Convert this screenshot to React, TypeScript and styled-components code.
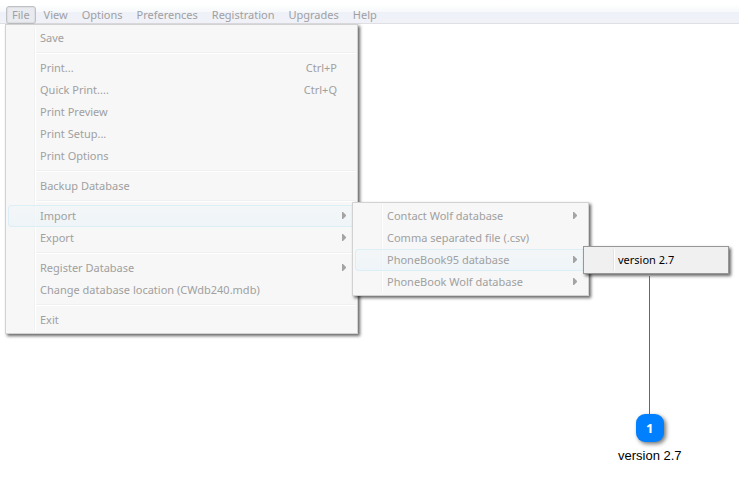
import React from "react";
import styled, { createGlobalStyle, css } from "styled-components";

const GlobalStyle = createGlobalStyle`
  *, *::before, *::after { box-sizing: border-box; }
  body {
    margin: 0;
    background: #ffffff;
    font-family: "Noto Sans", "Open Sans", sans-serif;
    font-size: 11px;
  }
`;

const Page = styled.main`
  min-height: 100vh;
  padding: 5px 9px 0 0;
`;

const MenuBar = styled.ul`
  display: flex;
  height: 19px;
  margin: 0;
  padding: 1px 5px 0;
  list-style: none;
  border-bottom: 1px solid #dfdfe4;
  background: linear-gradient(#fefefe 0, #f6f8fb 7px, #eef1f8 7px, #f1f2f8 100%);
`;

const BarItem = styled.li`
  position: relative;
`;

const BarButton = styled.button<{ $open?: boolean }>`
  display: block;
  height: 18px;
  margin: 0 1px;
  padding: 0 5px;
  border: 1px solid ${(p) => (p.$open ? "#bfc1c4" : "transparent")};
  border-radius: 3px;
  background: ${(p) => (p.$open ? "#e9ebf0" : "transparent")};
  box-shadow: ${(p) => (p.$open ? "inset 0 0 1px 1px #dcdee2" : "none")};
  color: #a0a0a2;
  font: inherit;
  line-height: 16px;
  white-space: nowrap;
`;

const Menu = styled.ul<{ $width: number; $active?: boolean }>`
  position: relative;
  width: max-content;
  min-width: ${(p) => p.$width}px;
  margin: 0;
  padding: 2px;
  list-style: none;
  border: 1px solid ${(p) => (p.$active ? "#979797" : "#d2d2d2")};
  box-shadow: 2px 2px 3px rgba(0, 0, 0, 0.6);
  ${(p) =>
    p.$active
      ? css`
          color: #000000;
          background: linear-gradient(90deg, #e2e3e3 1px, #ffffff 1px) 29px 2px / 2px calc(100% - 4px) no-repeat #f0f0f0;
        `
      : css`
          color: #a0a0a0;
          background: linear-gradient(90deg, #f0f1f1 1px, #ffffff 1px) 28px 2px / 2px calc(100% - 4px) no-repeat #f7f7f7;
        `}
`;

const FileMenu = styled(Menu)`
  margin-left: 5px;
`;

const Submenu = styled(Menu)`
  position: absolute;
  z-index: 1;
  top: -3px;
  left: calc(100% - 3px);
`;

const MenuItem = styled.li`
  position: relative;
`;

const ItemButton = styled.button<{ $selected?: boolean }>`
  display: flex;
  align-items: center;
  width: 100%;
  height: 22px;
  padding: 0 8px 2px 31px;
  border: 1px solid ${(p) => (p.$selected ? "#dceef6" : "transparent")};
  border-radius: 3px;
  background: ${(p) => (p.$selected ? "linear-gradient(rgba(242, 246, 248, 0.7), rgba(236, 244, 248, 0.8))" : "transparent")};
  color: inherit;
  font: inherit;
  text-align: left;
  white-space: nowrap;
`;

const ItemLabel = styled.span`
  flex: 1;
`;

const Shortcut = styled.kbd`
  padding-right: 9px;
  font: inherit;
`;

const Arrow = styled.svg`
  width: 4px;
  height: 7px;
  fill: #a4a4a4;
`;

const Separator = styled.li`
  height: 2px;
  margin: 3px 0 3px 28px;
  border-top: 1px solid #f0f0f0;
  border-bottom: 1px solid #ffffff;
`;

const Callout = styled.figure`
  position: absolute;
  top: 100%;
  left: 32px;
  display: flex;
  flex-direction: column;
  align-items: center;
  margin: 0;
  padding-top: 5px;
  color: #000000;
  font: 13px "Liberation Sans", Arial, sans-serif;
  white-space: nowrap;
`;

const Leader = styled.span`
  width: 1px;
  height: 138px;
  background: #0a7cf0;
`;

const Badge = styled.span`
  display: flex;
  align-items: center;
  justify-content: center;
  width: 28px;
  height: 28px;
  border-radius: 9px;
  background: #0080ff;
  box-shadow: 2px 2px 4px rgba(0, 0, 0, 0.55);
  color: #ffffff;
  font: bold 13px "Open Sans", "Noto Sans", sans-serif;
`;

const Caption = styled.figcaption`
  padding-top: 6px;
  line-height: 15px;
`;

type Entry = {
  label: string;
  shortcut?: string;
  arrow?: boolean;
  submenu?: React.ReactNode;
};

function Item({ label, shortcut, arrow, submenu, children }: Entry & { children?: React.ReactNode }) {
  const hasMenu = arrow || Boolean(submenu);
  return (
    <MenuItem>
      <ItemButton
        type="button"
        $selected={Boolean(submenu)}
        aria-haspopup={hasMenu ? "menu" : undefined}
        aria-expanded={hasMenu ? Boolean(submenu) : undefined}
      >
        <ItemLabel>{label}</ItemLabel>
        {shortcut && <Shortcut>{shortcut}</Shortcut>}
        {hasMenu && (
          <Arrow viewBox="0 0 4 7" aria-hidden="true">
            <path d="M0 0H1L4 3V4L1 7H0Z" />
          </Arrow>
        )}
      </ItemButton>
      {submenu}
      {children}
    </MenuItem>
  );
}

function VersionMenu() {
  return (
    <Submenu $width={146} $active>
      <Item label="version 2.7">
        <Callout>
          <Leader />
          <Badge>1</Badge>
          <Caption>version 2.7</Caption>
        </Callout>
      </Item>
    </Submenu>
  );
}

function ImportMenu() {
  return (
    <Submenu $width={237}>
      <Item label="Contact Wolf database" arrow />
      <Item label="Comma separated file (.csv)" />
      <Item label="PhoneBook95 database" submenu={<VersionMenu />} />
      <Item label="PhoneBook Wolf database" arrow />
    </Submenu>
  );
}

const fileGroups: Entry[][] = [
  [{ label: "Save" }],
  [
    { label: "Print...", shortcut: "Ctrl+P" },
    { label: "Quick Print....", shortcut: "Ctrl+Q" },
    { label: "Print Preview" },
    { label: "Print Setup..." },
    { label: "Print Options" },
  ],
  [{ label: "Backup Database" }],
  [
    { label: "Import", submenu: <ImportMenu /> },
    { label: "Export", arrow: true },
  ],
  [
    { label: "Register Database", arrow: true },
    { label: "Change database location (CWdb240.mdb)" },
  ],
  [{ label: "Exit" }],
];

const barMenus = ["File", "View", "Options", "Preferences", "Registration", "Upgrades", "Help"];

export default function App() {
  return (
    <>
      <GlobalStyle />
      <Page>
        <MenuBar>
          {barMenus.map((label) => (
            <BarItem key={label}>
              <BarButton
                type="button"
                $open={label === "File"}
                aria-haspopup="menu"
                aria-expanded={label === "File"}
              >
                {label}
              </BarButton>
            </BarItem>
          ))}
        </MenuBar>
        <FileMenu $width={353} aria-label="File">
          {fileGroups.map((group, index) => (
            <React.Fragment key={group[0].label}>
              {index > 0 && <Separator role="separator" />}
              {group.map((entry) => (
                <Item key={entry.label} {...entry} />
              ))}
            </React.Fragment>
          ))}
        </FileMenu>
      </Page>
    </>
  );
}
